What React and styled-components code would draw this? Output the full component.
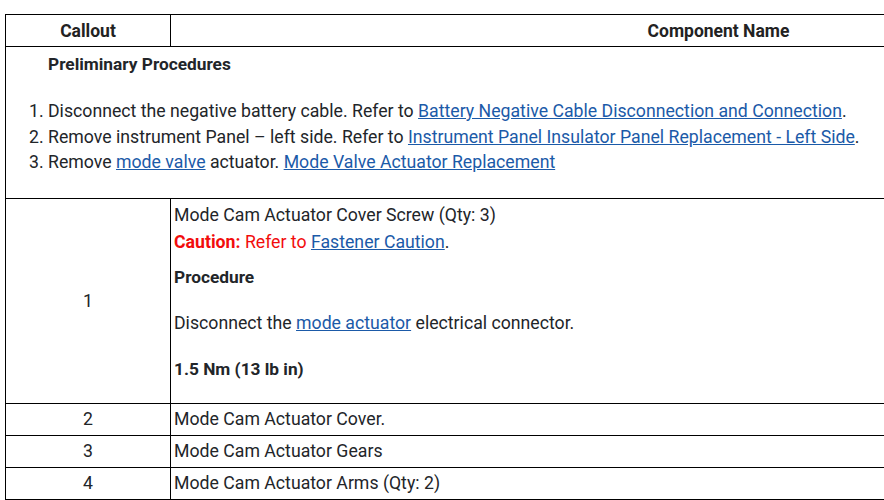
import styled, { createGlobalStyle } from "styled-components";

const GlobalStyle = createGlobalStyle`
  html, body {
    margin: 0;
    padding: 0;
    background: #fff;
    overflow: hidden;
  }
  body {
    font-family: Roboto, "Liberation Sans", sans-serif;
    color: #222529;
  }
`;

const steps = [
  {
    text: "Disconnect the negative battery cable. Refer to ",
    link: "Battery Negative Cable Disconnection and Connection",
    after: ".",
  },
  {
    text: "Remove instrument Panel \u2013 left side. Refer to ",
    link: "Instrument Panel Insulator Panel Replacement - Left Side",
    after: ".",
  },
];

const parts = [
  { callout: "2", name: "Mode Cam Actuator Cover." },
  { callout: "3", name: "Mode Cam Actuator Gears" },
  { callout: "4", name: "Mode Cam Actuator Arms (Qty: 2)" },
];

export default function App() {
  return (
    <>
      <GlobalStyle />
      <Page>
        <Table>
          <colgroup>
            <col style={{ width: 165 }} />
            <col />
          </colgroup>
          <thead>
            <tr>
              <HeadCell>Callout</HeadCell>
              <HeadCell>Component Name</HeadCell>
            </tr>
          </thead>
          <tbody>
            <tr>
              <PrelimCell colSpan={2}>
                <PrelimTitle>Preliminary Procedures</PrelimTitle>
                <Steps>
                  {steps.map((s) => (
                    <li key={s.link}>
                      {s.text}
                      <Link href="#">{s.link}</Link>
                      {s.after}
                    </li>
                  ))}
                  <li>
                    Remove <Link href="#">mode valve</Link> actuator.{" "}
                    <Link href="#">Mode Valve Actuator Replacement</Link>
                  </li>
                </Steps>
              </PrelimCell>
            </tr>
            <tr>
              <CalloutCell>1</CalloutCell>
              <NameCell $tall>
                <Line>Mode Cam Actuator Cover Screw (Qty: 3)</Line>
                <Caution>
                  <strong>Caution:</strong> Refer to{" "}
                  <Link href="#">Fastener Caution</Link>
                  <Plain>.</Plain>
                </Caution>
                <Line $gap={11} $bold>
                  Procedure
                </Line>
                <Line $gap={22}>
                  Disconnect the <Link href="#">mode actuator</Link>{" "}
                  electrical connector.
                </Line>
                <Line $gap={22} $bold>
                  1.5 Nm (13 lb in)
                </Line>
              </NameCell>
            </tr>
            {parts.map((p) => (
              <tr key={p.callout}>
                <CalloutCell>{p.callout}</CalloutCell>
                <NameCell>{p.name}</NameCell>
              </tr>
            ))}
          </tbody>
        </Table>
      </Page>
    </>
  );
}

const Page = styled.div`
  padding: 14px 0 0 5px;
  width: 884px;
  box-sizing: border-box;
  overflow: hidden;
`;

const Table = styled.table`
  border-collapse: collapse;
  width: 1262px;
  table-layout: fixed;
  font-size: 17.7px;
  line-height: 24px;
`;

const HeadCell = styled.th`
  border: 1px solid #000;
  font-size: 17.5px;
  font-weight: 700;
  text-align: center;
  padding: 4px 4px 3px;
  color: #222;
`;

const PrelimCell = styled.td`
  border: 1px solid #000;
  padding: 5px 4px 22px 3px;
`;

const PrelimTitle = styled.div`
  font-size: 17.3px;
  font-weight: 700;
  margin-left: 39px;
  line-height: 24px;
`;

const Steps = styled.ol`
  margin: 23px 0 0;
  padding-left: 39px;
  line-height: 25.5px;
`;

const Link = styled.a`
  color: #1b5aa8;
  text-decoration: underline;
`;

const CalloutCell = styled.td`
  border: 1px solid #000;
  text-align: center;
  vertical-align: middle;
  padding: 3px 4px;
`;

const NameCell = styled.td`
  border: 1px solid #000;
  padding: ${(p) => (p.$tall ? "4px 3px 22px" : "3px 3px 4px")};
  vertical-align: top;
`;

const Line = styled.div`
  margin-top: ${(p) => p.$gap || 0}px;
  font-weight: ${(p) => (p.$bold ? 700 : 400)};
  font-size: ${(p) => (p.$bold ? "17.3px" : "inherit")};
`;

const Caution = styled.div`
  margin-top: 3px;
  color: #f20c0c;
`;

const Plain = styled.span`
  color: #222529;
`;
